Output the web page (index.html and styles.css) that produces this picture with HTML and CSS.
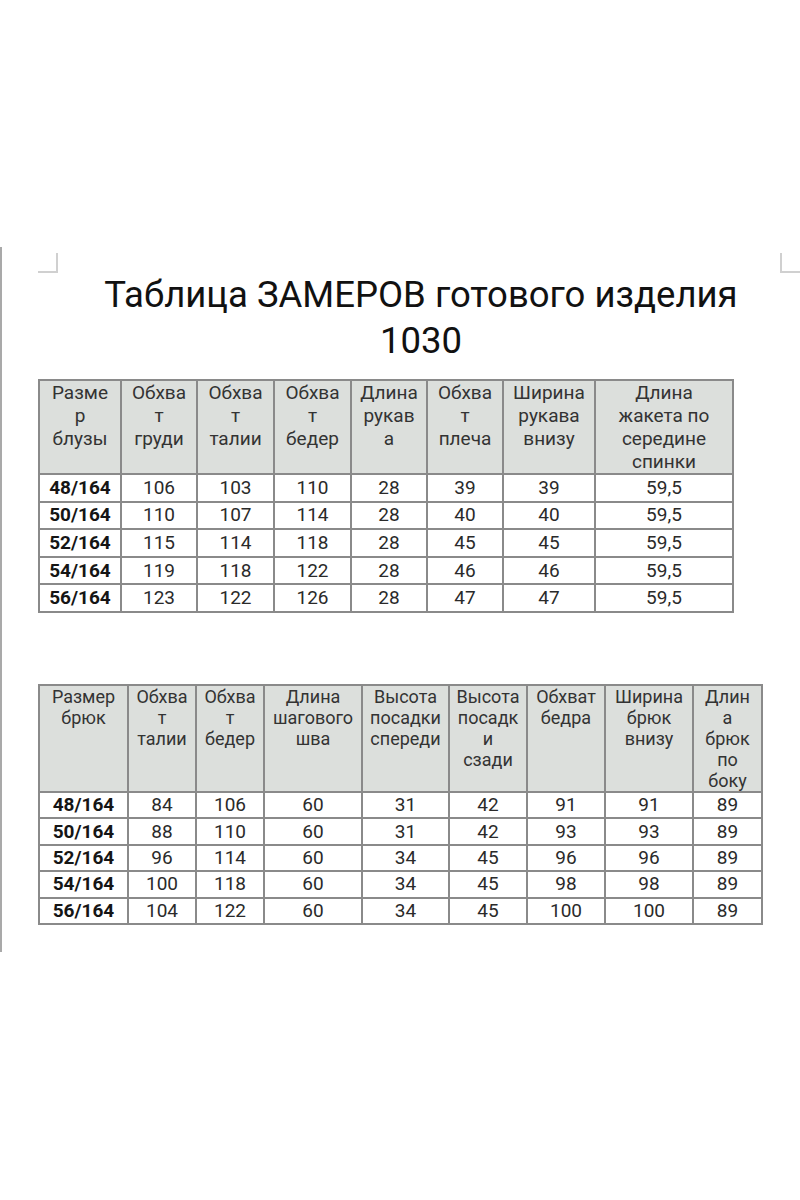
FILE: index.html
```html
<!DOCTYPE html>
<html lang="ru">
<head>
<meta charset="utf-8">
<title>Таблица замеров</title>
<link rel="stylesheet" href="styles.css">
</head>
<body>
<div class="page">
  <div class="marks"><span class="mark mark-l"></span><span class="mark mark-r"></span></div>
  <h1 class="title">Таблица ЗАМЕРОВ готового изделия<br>1030</h1>

  <table class="tbl t1">
    <colgroup>
      <col style="width:82px"><col style="width:76px"><col style="width:77px"><col style="width:77px">
      <col style="width:76px"><col style="width:76px"><col style="width:92px"><col style="width:138px">
    </colgroup>
    <thead>
      <tr>
        <th>Разме<br>р<br>блузы</th>
        <th>Обхва<br>т<br>груди</th>
        <th>Обхва<br>т<br>талии</th>
        <th>Обхва<br>т<br>бедер</th>
        <th>Длина<br>рукав<br>а</th>
        <th>Обхва<br>т<br>плеча</th>
        <th>Ширина<br>рукава<br>внизу</th>
        <th>Длина<br>жакета по<br>середине<br>спинки</th>
      </tr>
    </thead>
    <tbody>
      <tr><td class="sz">48/164</td><td>106</td><td>103</td><td>110</td><td>28</td><td>39</td><td>39</td><td>59,5</td></tr>
      <tr><td class="sz">50/164</td><td>110</td><td>107</td><td>114</td><td>28</td><td>40</td><td>40</td><td>59,5</td></tr>
      <tr><td class="sz">52/164</td><td>115</td><td>114</td><td>118</td><td>28</td><td>45</td><td>45</td><td>59,5</td></tr>
      <tr><td class="sz">54/164</td><td>119</td><td>118</td><td>122</td><td>28</td><td>46</td><td>46</td><td>59,5</td></tr>
      <tr><td class="sz">56/164</td><td>123</td><td>122</td><td>126</td><td>28</td><td>47</td><td>47</td><td>59,5</td></tr>
    </tbody>
  </table>

  <table class="tbl t2">
    <colgroup>
      <col style="width:89px"><col style="width:68px"><col style="width:68px"><col style="width:98px">
      <col style="width:87px"><col style="width:78px"><col style="width:78px"><col style="width:88px"><col style="width:69px">
    </colgroup>
    <thead>
      <tr>
        <th>Размер<br>брюк</th>
        <th>Обхва<br>т<br>талии</th>
        <th>Обхва<br>т<br>бедер</th>
        <th>Длина<br>шагового<br>шва</th>
        <th>Высота<br>посадки<br>спереди</th>
        <th>Высота<br>посадк<br>и<br>сзади</th>
        <th>Обхват<br>бедра</th>
        <th>Ширина<br>брюк<br>внизу</th>
        <th>Длин<br>а<br>брюк<br>по<br>боку</th>
      </tr>
    </thead>
    <tbody>
      <tr><td class="sz">48/164</td><td>84</td><td>106</td><td>60</td><td>31</td><td>42</td><td>91</td><td>91</td><td>89</td></tr>
      <tr><td class="sz">50/164</td><td>88</td><td>110</td><td>60</td><td>31</td><td>42</td><td>93</td><td>93</td><td>89</td></tr>
      <tr><td class="sz">52/164</td><td>96</td><td>114</td><td>60</td><td>34</td><td>45</td><td>96</td><td>96</td><td>89</td></tr>
      <tr><td class="sz">54/164</td><td>100</td><td>118</td><td>60</td><td>34</td><td>45</td><td>98</td><td>98</td><td>89</td></tr>
      <tr><td class="sz">56/164</td><td>104</td><td>122</td><td>60</td><td>34</td><td>45</td><td>100</td><td>100</td><td>89</td></tr>
    </tbody>
  </table>
</div>
</body>
</html>
```

FILE: styles.css
```css
html, body {
  margin: 0;
  padding: 0;
  background: #ffffff;
}

body {
  font-family: Roboto, "Noto Sans", "Liberation Sans", sans-serif;
  color: #222;
}

.page {
  box-sizing: border-box;
  margin-top: 247px;
  padding-top: 6px;
  height: 705px;
  border-left: 2px solid #a9a9a9;
}

.marks {
  display: flex;
  justify-content: space-between;
  padding-left: 36px;
  height: 20px;
}

.mark {
  box-sizing: border-box;
  width: 20px;
  height: 20px;
  border-bottom: 2px solid #d0d0d0;
}

.mark-l {
  border-right: 2px solid #d0d0d0;
}

.mark-r {
  border-left: 2px solid #d0d0d0;
}

.title {
  margin: -1px 0 15px;
  padding-left: 40px;
  text-align: center;
  font-size: 36.5px;
  line-height: 46px;
  font-weight: 400;
  color: #111;
}

.tbl {
  margin-left: 36px;
  border-collapse: collapse;
  table-layout: fixed;
}

.tbl th,
.tbl td {
  border: 2px solid #8a8a8a;
  padding: 0;
  text-align: center;
}

.tbl th {
  background: #dcdfdc;
  vertical-align: top;
  font-weight: 400;
  color: #333;
}

.tbl td {
  vertical-align: middle;
  font-size: 19px;
  line-height: 22px;
  color: #2a2a2a;
}

.tbl td.sz {
  font-weight: 700;
  color: #151515;
}

.t1 {
  width: 696px;
}

.t1 th {
  font-size: 19px;
  line-height: 23px;
}

.t1 td {
  height: 25.6px;
}

.t2 {
  width: 725px;
  margin-top: 71px;
}

.t2 th {
  font-size: 18px;
  line-height: 21px;
}

.t2 td {
  height: 24.4px;
}
```
